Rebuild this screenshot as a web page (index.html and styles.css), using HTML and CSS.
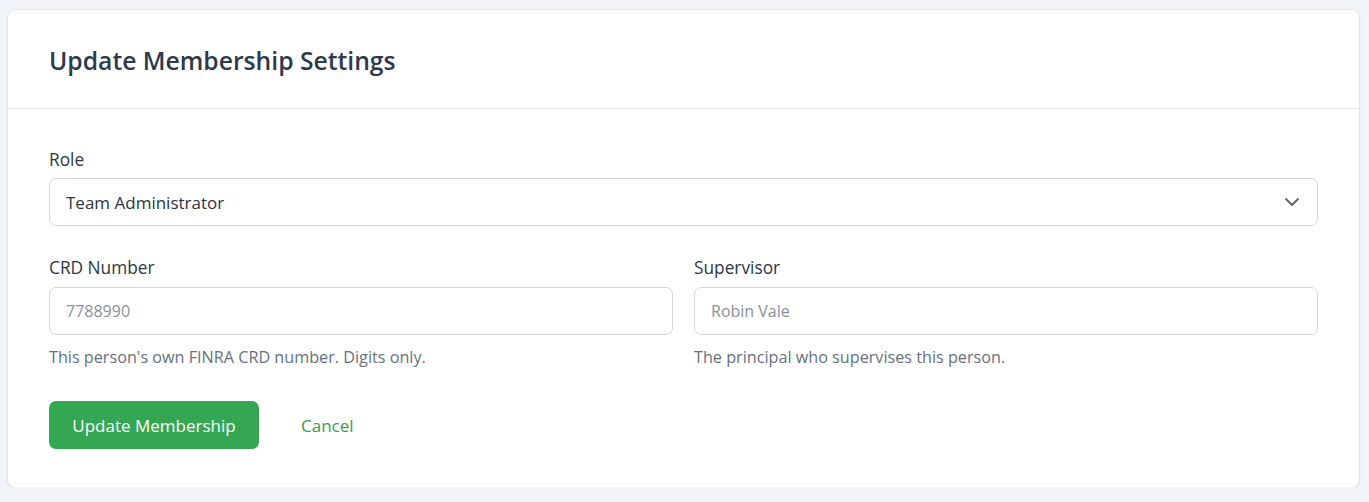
FILE: index.html
```html
<!DOCTYPE html>
<html lang="en">
<head>
<meta charset="utf-8">
<title>Update Membership Settings</title>
<link rel="stylesheet" href="styles.css">
</head>
<body>
<div class="card">
  <div class="card-header">
    <h1 class="title">Update Membership Settings</h1>
  </div>
  <form class="card-body">
    <div class="field">
      <label class="label" for="role">Role</label>
      <div class="select-wrap">
        <select id="role" class="control select">
          <option>Team Administrator</option>
        </select>
        <svg class="chevron" width="14" height="8" viewBox="0 0 14 8" aria-hidden="true">
          <polyline points="1,1 7,7 13,1" fill="none" stroke="#5f6670" stroke-width="1.8" stroke-linecap="round" stroke-linejoin="round"/>
        </svg>
      </div>
    </div>
    <div class="row">
      <div class="field">
        <label class="label" for="crd">CRD Number</label>
        <input id="crd" class="control input" type="text" placeholder="7788990">
        <p class="help">This person's own FINRA CRD number. Digits only.</p>
      </div>
      <div class="field">
        <label class="label" for="sup">Supervisor</label>
        <input id="sup" class="control input" type="text" placeholder="Robin Vale">
        <p class="help">The principal who supervises this person.</p>
      </div>
    </div>
    <div class="actions">
      <button type="button" class="btn-primary">Update Membership</button>
      <a class="btn-link" href="#">Cancel</a>
    </div>
  </form>
</div>
</body>
</html>
```
FILE: styles.css
```css
* { box-sizing: border-box; }
html, body { margin: 0; }
body {
  background: #f1f4f8;
  font-family: "Open Sans", "Noto Sans", sans-serif;
  padding: 10px 10px 0 8px;
  color: #2d3748;
}
.card {
  background: #ffffff;
  border-radius: 7px;
  box-shadow: 0 1px 3px rgba(15, 23, 42, 0.12), 0 0 0 1px rgba(15, 23, 42, 0.03);
  height: 477px;
}
.card-header {
  height: 99px;
  padding: 0 41px;
  display: flex;
  align-items: center;
  border-bottom: 1px solid #e3e6ea;
}
.title {
  margin: 0;
  font-size: 24.7px;
  font-weight: 600;
  color: #2d3a4e;
  line-height: 34px;
  padding-top: 4px;
}
.card-body {
  padding: 39px 41px 37px;
  display: flex;
  flex-direction: column;
}
.field {
  display: flex;
  flex-direction: column;
  min-width: 0;
}
.label {
  font-size: 17.3px;
  line-height: 24px;
  color: #2d3748;
  margin-bottom: 6px;
}
.row {
  display: grid;
  grid-template-columns: 1fr 1fr;
  column-gap: 21px;
  margin-top: 30px;
}
.row .label { margin-bottom: 7px; }
.control {
  width: 100%;
  height: 48px;
  border: 1px solid #d3d6db;
  border-radius: 7px;
  background: #ffffff;
  font-family: inherit;
  padding: 0 16px;
  outline: none;
}
.select-wrap { position: relative; }
.select {
  appearance: none;
  -webkit-appearance: none;
  font-size: 17px;
  color: #2a3342;
}
.chevron {
  position: absolute;
  right: 19px;
  top: 20px;
  pointer-events: none;
}
.input {
  font-size: 16px;
  color: #2a3342;
}
.input::placeholder { color: #8b9098; }
.help {
  margin: 11px 0 0;
  font-size: 16.2px;
  line-height: 22px;
  color: #667180;
}
.actions {
  margin-top: 33px;
  display: flex;
  align-items: center;
  gap: 42px;
}
.btn-primary {
  height: 48px;
  width: 210px;
  border: none;
  border-radius: 7px;
  background: #33a752;
  color: #ffffff;
  font-family: inherit;
  font-size: 17px;
  padding: 0;
}
.btn-link {
  color: #37a04f;
  font-size: 17px;
  text-decoration: none;
}
```
